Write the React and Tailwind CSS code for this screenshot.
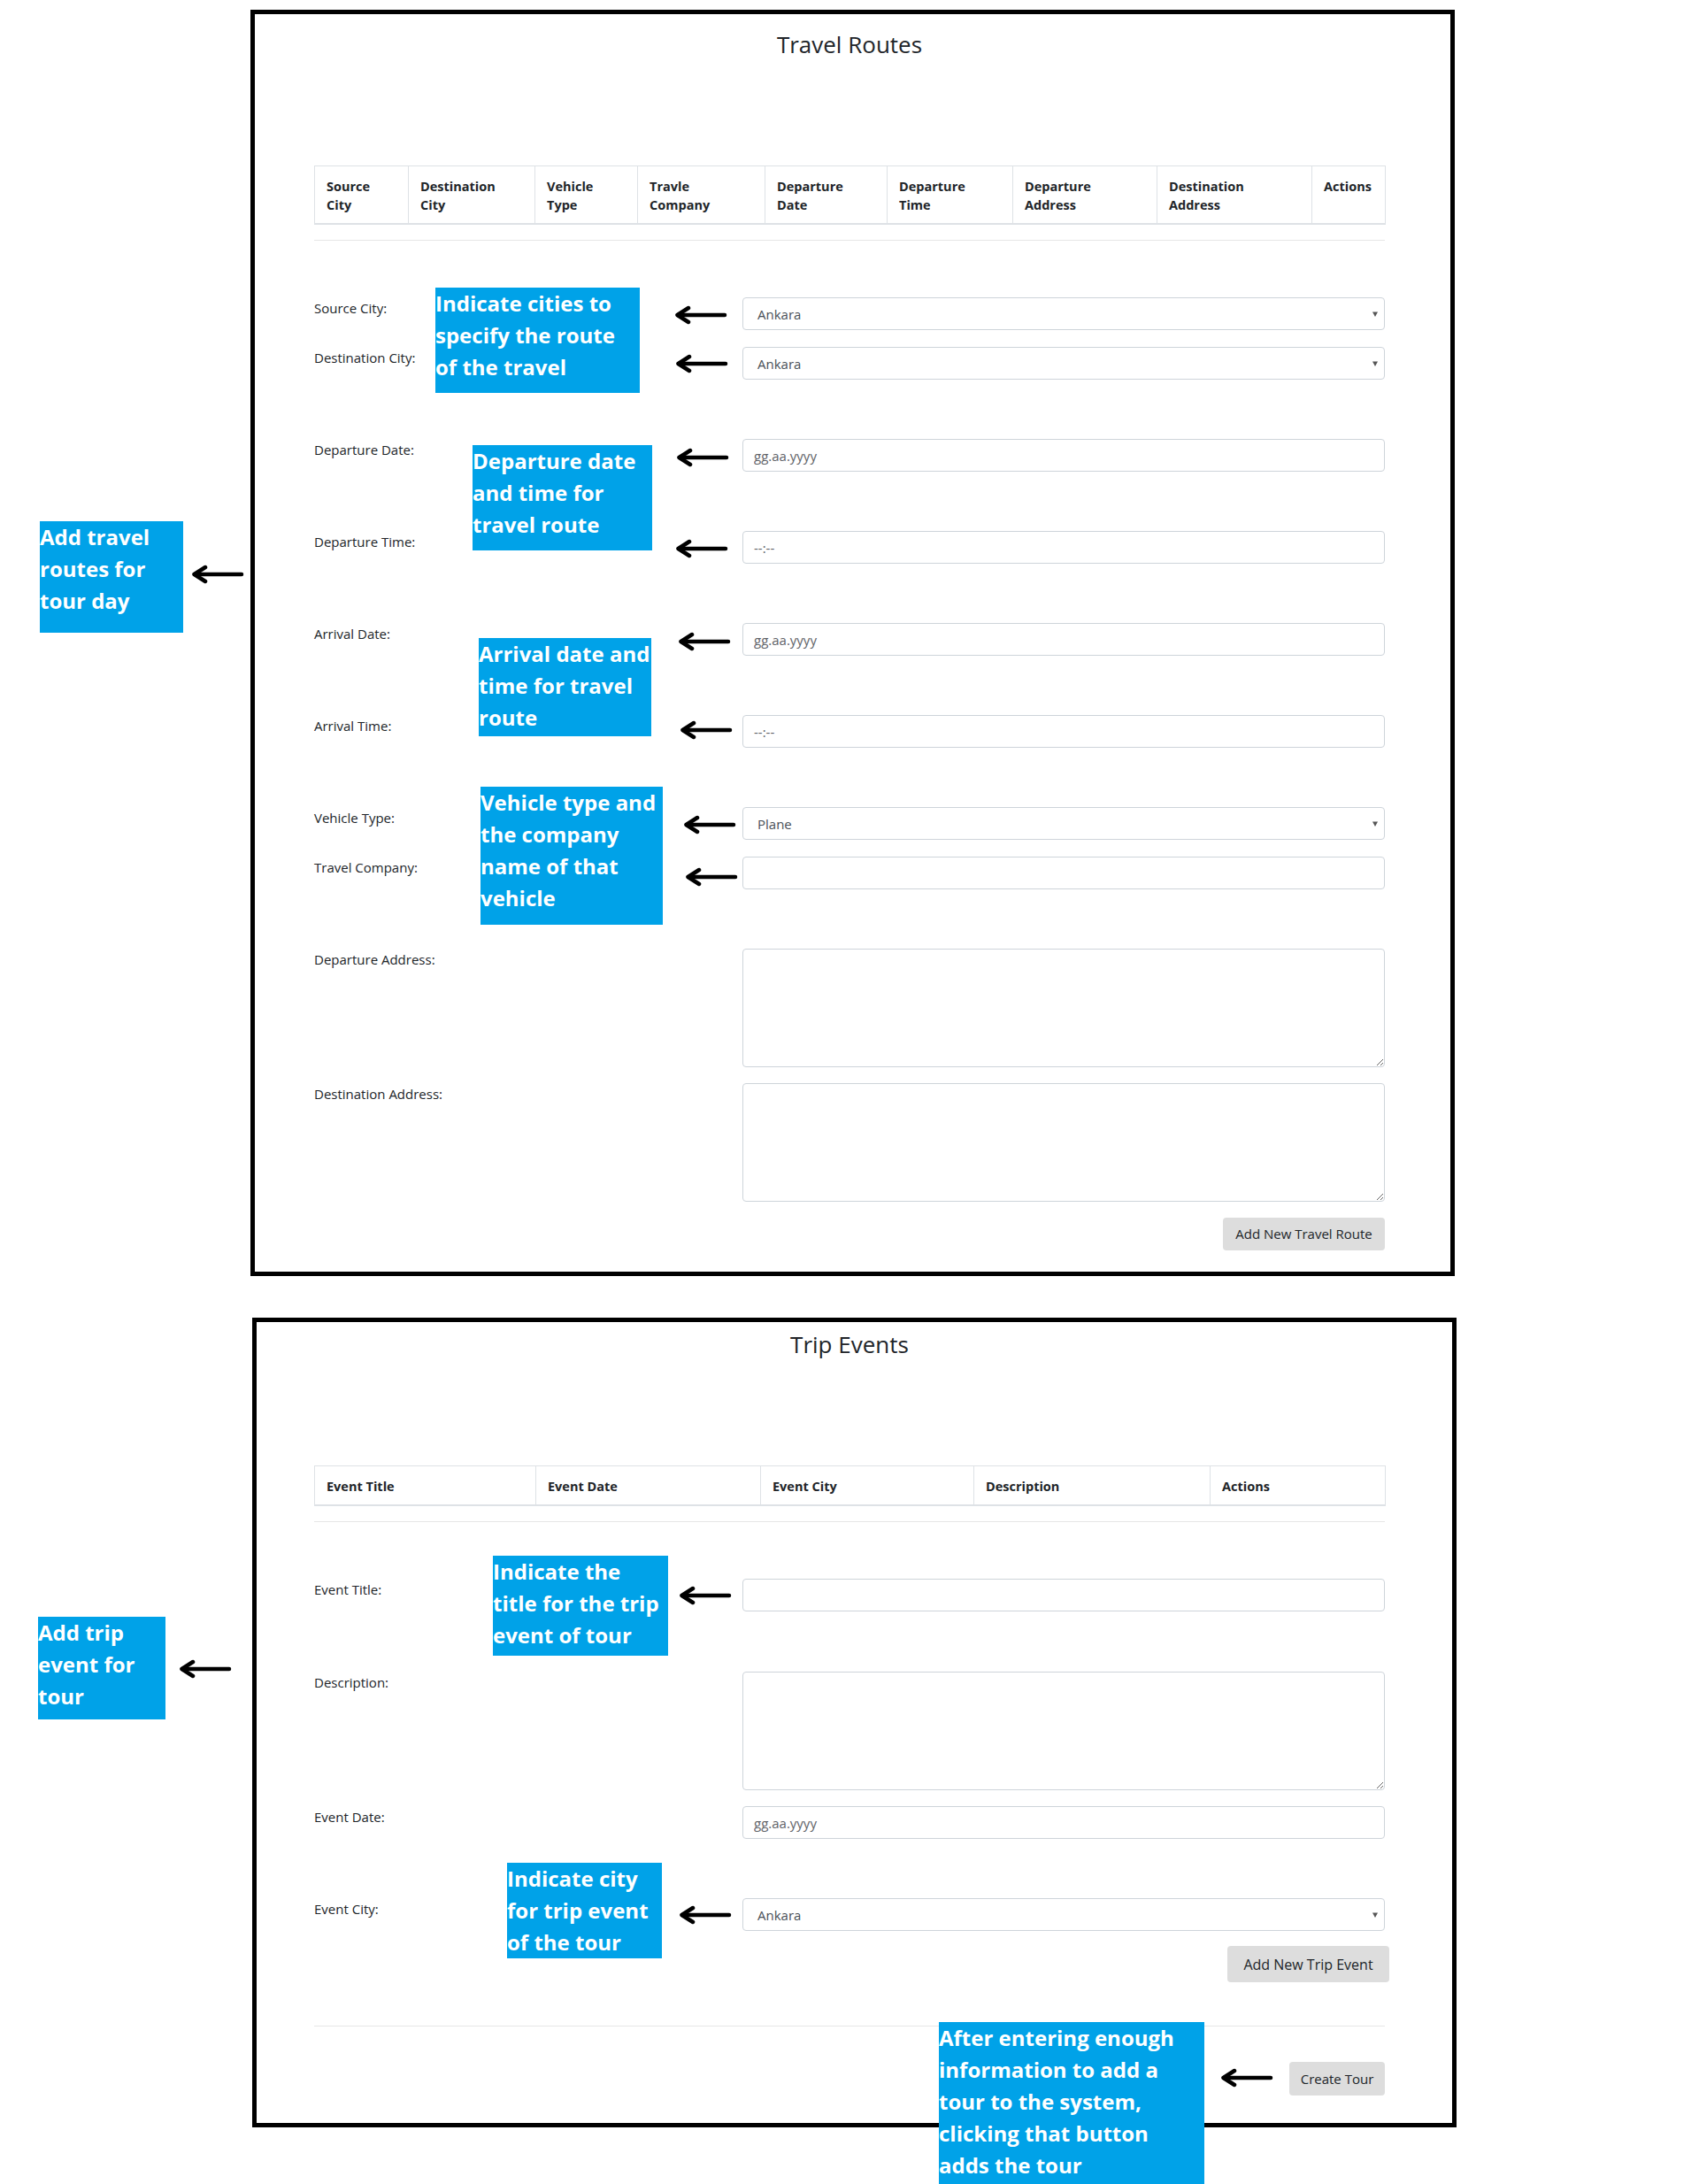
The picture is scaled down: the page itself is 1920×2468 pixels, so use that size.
import React from 'react'

const routeCols = [
  { w: 'w-[106px]', lines: ['Source', 'City'] },
  { w: 'w-[143px]', lines: ['Destination', 'City'] },
  { w: 'w-[116px]', lines: ['Vehicle', 'Type'] },
  { w: 'w-[144px]', lines: ['Travle', 'Company'] },
  { w: 'w-[138px]', lines: ['Departure', 'Date'] },
  { w: 'w-[142px]', lines: ['Departure', 'Time'] },
  { w: 'w-[163px]', lines: ['Departure', 'Address'] },
  { w: 'w-[175px]', lines: ['Destination', 'Address'] },
  { w: 'w-[83px]', lines: ['Actions'] }
]

const eventCols = [
  { w: 'w-[250px]', lines: ['Event Title'] },
  { w: 'w-[254px]', lines: ['Event Date'] },
  { w: 'w-[241px]', lines: ['Event City'] },
  { w: 'w-[267px]', lines: ['Description'] },
  { w: 'w-[198px]', lines: ['Actions'] }
]

const notes = [
  { pos: 'left-[492px] top-[325px] w-[231px] h-[119px]', lines: ['Indicate cities to', 'specify the route', 'of the travel'] },
  { pos: 'left-[534px] top-[503px] w-[203px] h-[119px]', lines: ['Departure date', 'and time for', 'travel route'] },
  { pos: 'left-[541px] top-[721px] w-[195px] h-[111px]', lines: ['Arrival date and', 'time for travel', 'route'] },
  { pos: 'left-[543px] top-[889px] w-[206px] h-[156px]', lines: ['Vehicle type and', 'the company', 'name of that', 'vehicle'] },
  { pos: 'left-[557px] top-[1758px] w-[198px] h-[113px]', lines: ['Indicate the', 'title for the trip', 'event of tour'] },
  { pos: 'left-[573px] top-[2105px] w-[175px] h-[108px]', lines: ['Indicate city', 'for trip event', 'of the tour'] },
  { pos: 'left-[1061px] top-[2285px] w-[300px] h-[183px]', lines: ['After entering enough', 'information to add a', 'tour to the system,', 'clicking that button', 'adds the tour'] },
  { pos: 'left-[45px] top-[589px] w-[162px] h-[126px]', lines: ['Add travel', 'routes for', 'tour day'] },
  { pos: 'left-[43px] top-[1827px] w-[144px] h-[116px]', lines: ['Add trip', 'event for', 'tour'] }
]

const arrows = [
  'left-[762px] top-[345px]',
  'left-[763px] top-[400px]',
  'left-[764px] top-[506px]',
  'left-[763px] top-[609px]',
  'left-[766px] top-[714px]',
  'left-[768px] top-[814px]',
  'left-[772px] top-[921px]',
  'left-[774px] top-[980px]',
  'left-[767px] top-[1792px]',
  'left-[767px] top-[2153px]',
  'left-[1379px] top-[2337px]',
  'left-[216px] top-[638px]',
  'left-[202px] top-[1875px]'
]

function Arrow({ pos }) {
  return (
    <svg className={`absolute ${pos}`} width="60" height="22" viewBox="0 0 60 22" fill="none">
      <path d="M57 11H4" stroke="#000" strokeWidth="4.5" strokeLinecap="round" />
      <path d="M16 3L3.5 11L16 19" stroke="#000" strokeWidth="4.5" strokeLinecap="round" strokeLinejoin="round" />
    </svg>
  )
}

function Note({ pos, lines }) {
  return (
    <div className={`absolute ${pos} bg-[#00a2e8] text-white font-bold text-[24px] leading-[36px] whitespace-nowrap`}>
      {lines.map((l) => (
        <div key={l}>{l}</div>
      ))}
    </div>
  )
}

function HeadTable({ cols }) {
  return (
    <table className="w-full table-fixed border-collapse">
      <thead>
        <tr>
          {cols.map((c, i) => (
            <th
              key={i}
              className={`${c.w} border border-b-2 border-[#dee2e6] px-[13px] pt-[12px] pb-[10px] text-left align-top font-bold text-[14.5px] leading-[21px] text-[#212529]`}
            >
              {c.lines.map((l, j) => (
                <div key={j}>{l}</div>
              ))}
            </th>
          ))}
        </tr>
      </thead>
    </table>
  )
}

function Row({ label, className = '', children }) {
  return (
    <div className={`flex ${className}`}>
      <div className="w-[484px] shrink-0 pt-[2px] text-[15px] leading-[21px] text-[#212529]">{label}</div>
      <div className="flex-1 min-w-0">{children}</div>
    </div>
  )
}

function Select({ value }) {
  return (
    <div className="h-[37px] flex items-center justify-between border border-[#ced4da] rounded-[4px] pl-[16px] pr-[7px] text-[15px] text-[#495057]">
      <span className="pt-[2px]">{value}</span>
      <svg width="6" height="6" viewBox="0 0 6 6">
        <path d="M0 0.5h6L3 6z" fill="#555" />
      </svg>
    </div>
  )
}

function Input({ placeholder = '' }) {
  return (
    <input
      type="text"
      placeholder={placeholder}
      className="block w-full h-[37px] border border-[#ced4da] rounded-[4px] px-[12px] text-[15px] text-[#495057] placeholder:text-[#5f6368] outline-none bg-white"
    />
  )
}

function Area() {
  return (
    <textarea className="block w-full h-[134px] border border-[#ced4da] rounded-[4px] px-[12px] py-[6px] text-[15px] text-[#495057] outline-none" />
  )
}

function Button({ className = '', children }) {
  return (
    <button className={`bg-[#dddddd] rounded-[4px] text-[#212529] ${className}`}>{children}</button>
  )
}

export default function App() {
  return (
    <div className="relative w-[1920px] h-[2468px] overflow-hidden bg-white pt-[11px] font-['Open_Sans',sans-serif]">
      {/* travel routes */}
      <div className="ml-[283px] w-[1361px] border-[5px] border-black pl-[67px] pr-[74px] pt-[16px] pb-[24px]">
        <h2 className="text-center text-[26px] leading-[36px] text-[#212529]">Travel Routes</h2>
        <div className="mt-[119px]">
          <HeadTable cols={routeCols} />
        </div>
        <hr className="mt-[17px] border-0 border-t border-[#e6e6e6]" />

        <Row label="Source City:" className="mt-[64px]">
          <Select value="Ankara" />
        </Row>
        <Row label="Destination City:" className="mt-[19px]">
          <Select value="Ankara" />
        </Row>
        <Row label="Departure Date:" className="mt-[67px]">
          <Input placeholder="gg.aa.yyyy" />
        </Row>
        <Row label="Departure Time:" className="mt-[67px]">
          <Input placeholder="--:--" />
        </Row>
        <Row label="Arrival Date:" className="mt-[67px]">
          <Input placeholder="gg.aa.yyyy" />
        </Row>
        <Row label="Arrival Time:" className="mt-[67px]">
          <Input placeholder="--:--" />
        </Row>
        <Row label="Vehicle Type:" className="mt-[67px]">
          <Select value="Plane" />
        </Row>
        <Row label="Travel Company:" className="mt-[19px]">
          <Input />
        </Row>
        <Row label="Departure Address:" className="mt-[67px]">
          <Area />
        </Row>
        <Row label="Destination Address:" className="mt-[18px]">
          <Area />
        </Row>
        <div className="mt-[18px] flex justify-end">
          <Button className="w-[183px] h-[37px] text-[15px]">Add New Travel Route</Button>
        </div>
      </div>

      {/* trip events */}
      <div className="mt-[47px] ml-[285px] w-[1361px] border-[5px] border-black pl-[65px] pr-[76px] pt-[7px] pb-[31px]">
        <h2 className="text-center text-[26px] leading-[36px] text-[#212529]">Trip Events</h2>
        <div className="mt-[119px]">
          <HeadTable cols={eventCols} />
        </div>
        <hr className="mt-[17px] border-0 border-t border-[#e6e6e6]" />

        <Row label="Event Title:" className="mt-[64px]">
          <Input />
        </Row>
        <Row label="Description:" className="mt-[68px]">
          <Area />
        </Row>
        <Row label="Event Date:" className="mt-[18px]">
          <Input placeholder="gg.aa.yyyy" />
        </Row>
        <Row label="Event City:" className="mt-[67px]">
          <Select value="Ankara" />
        </Row>
        <div className="mt-[17px] flex justify-end -mr-[5px]">
          <Button className="w-[183px] h-[41px] text-[16px]">Add New Trip Event</Button>
        </div>
        <hr className="mt-[49px] border-0 border-t border-[#e6e6e6]" />
        <div className="mt-[40px] flex justify-end">
          <Button className="w-[108px] h-[38px] text-[15px]">Create Tour</Button>
        </div>
      </div>

      {notes.map((n) => (
        <Note key={n.pos} pos={n.pos} lines={n.lines} />
      ))}
      {arrows.map((a) => (
        <Arrow key={a} pos={a} />
      ))}
    </div>
  )
}
